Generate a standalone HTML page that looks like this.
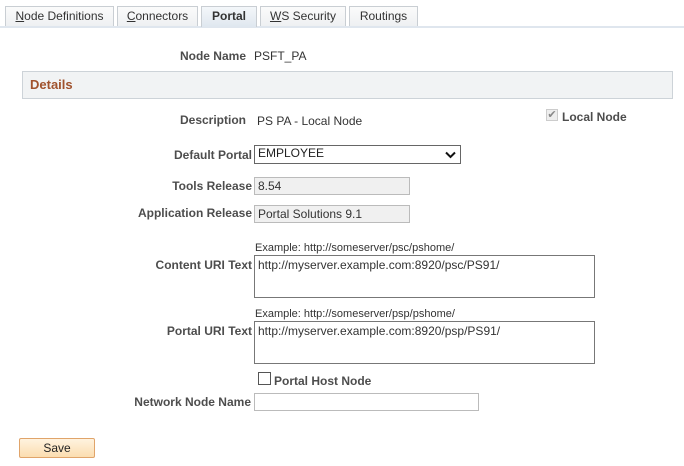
<!DOCTYPE html>
<html><head><style>
body{margin:0;width:684px;height:466px;background:#fff;font-family:"Liberation Sans",Arial,sans-serif;font-size:12px;color:#333;position:relative;overflow:hidden}
.a{position:absolute;white-space:nowrap}
.tab{position:absolute;top:6px;height:20px;border:1px solid #c9ced3;border-bottom:none;background:linear-gradient(#fbfbfb,#eef0f2);box-sizing:border-box;text-align:center;line-height:19px;color:#333;font-size:12px}
.tab.act{background:linear-gradient(#f4f7fa,#dfe7ef);font-weight:bold;height:21px}
.lbl{position:absolute;font-weight:bold;color:#4d4d4d;text-align:right;white-space:nowrap}
.box{position:absolute;box-sizing:border-box;border:1px solid #bbb;padding-left:3px;line-height:15px}
.ta{position:absolute;box-sizing:border-box;border:1px solid #777;padding:2px 3px}
u{text-decoration:underline}
</style></head><body>
<div class="a" style="left:0;top:26px;width:684px;height:2px;background:#dfe6ee"></div>
<div class="tab" style="left:5px;width:109px"><u>N</u>ode Definitions</div>
<div class="tab" style="left:117px;width:81px"><u>C</u>onnectors</div>
<div class="tab act" style="left:201px;width:56px">Portal</div>
<div class="tab" style="left:260px;width:86px"><u>W</u>S Security</div>
<div class="tab" style="left:349px;width:69px">Routings</div>

<div class="lbl" style="right:438px;top:49px">Node Name</div>
<div class="a" style="left:254px;top:49px;color:#333">PSFT_PA</div>

<div class="a" style="left:22px;top:71px;width:651px;height:28px;box-sizing:border-box;border:1px solid #cdd3d8;background:#f1f3f4"></div>
<div class="a" style="left:30px;top:77px;font-weight:bold;font-size:13px;color:#a0522d">Details</div>

<div class="lbl" style="right:438px;top:113px">Description</div>
<div class="a" style="left:257px;top:114px">PS PA - Local Node</div>
<div class="a" style="left:546px;top:109px;width:12px;height:12px;box-sizing:border-box;border:1px solid #ccc;background:#eee;font-size:11px;line-height:10px;color:#888;text-align:center">✔</div>
<div class="lbl" style="left:562px;top:110px">Local Node</div>

<div class="lbl" style="right:432px;top:148px">Default Portal</div>
<div class="box" style="left:254px;top:145px;width:207px;height:19px;border-color:#666;color:#222">EMPLOYEE
<svg style="position:absolute;right:4px;top:5px" width="11" height="8" viewBox="0 0 11 8"><path d="M1 1.5L5.5 6L10 1.5" stroke="#111" stroke-width="2" fill="none"/></svg></div>

<div class="lbl" style="right:432px;top:179px">Tools Release</div>
<div class="box" style="left:254px;top:177px;width:156px;height:18px;background:#f0f0f0;line-height:16px">8.54</div>
<div class="lbl" style="right:432px;top:206px">Application Release</div>
<div class="box" style="left:254px;top:205px;width:156px;height:18px;background:#f0f0f0;line-height:16px">Portal Solutions 9.1</div>

<div class="a" style="left:255px;top:242px;font-size:11px">Example: http://someserver/psc/pshome/</div>
<div class="lbl" style="right:432px;top:258px">Content URI Text</div>
<div class="ta" style="left:254px;top:255px;width:341px;height:43px">http://myserver.example.com:8920/psc/PS91/</div>

<div class="a" style="left:255px;top:308px;font-size:11px">Example: http://someserver/psp/pshome/</div>
<div class="lbl" style="right:432px;top:324px">Portal URI Text</div>
<div class="ta" style="left:254px;top:321px;width:341px;height:43px">http://myserver.example.com:8920/psp/PS91/</div>

<div class="a" style="left:258px;top:372px;width:13px;height:13px;box-sizing:border-box;border:1px solid #555;background:#fff"></div>
<div class="lbl" style="left:274px;top:374px">Portal Host Node</div>

<div class="lbl" style="right:433px;top:395px">Network Node Name</div>
<div class="box" style="left:254px;top:393px;width:225px;height:18px"></div>

<div class="a" style="left:19px;top:438px;width:76px;height:20px;box-sizing:border-box;border:1px solid #e0a46a;border-radius:2px;background:linear-gradient(#fff3df,#fbddb0);text-align:center;line-height:18px;color:#222">Save</div>
</body></html>
